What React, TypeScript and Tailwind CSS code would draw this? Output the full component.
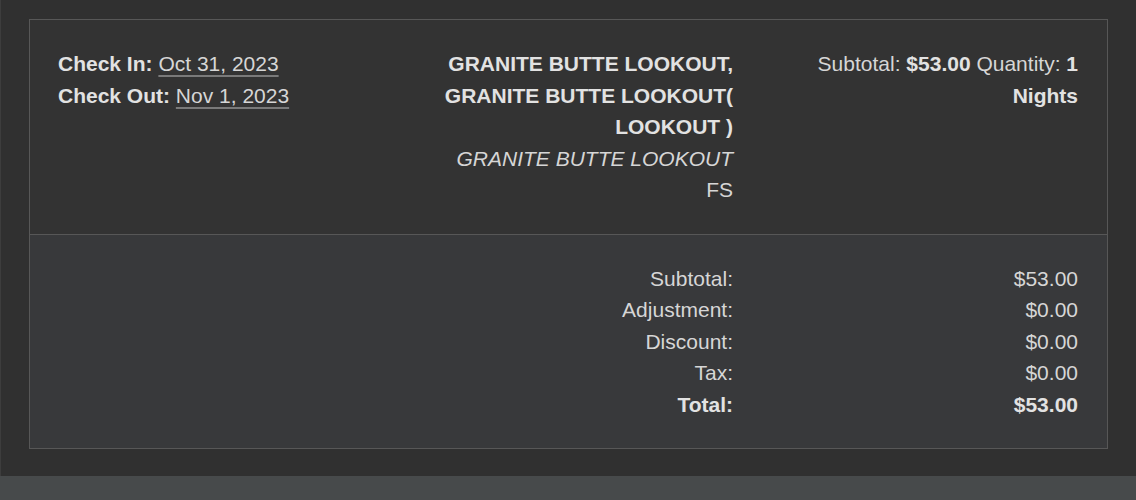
const rows = [
  { label: "Subtotal:", value: "$53.00" },
  { label: "Adjustment:", value: "$0.00" },
  { label: "Discount:", value: "$0.00" },
  { label: "Tax:", value: "$0.00" },
];

const ReservationSummary = () => {
  return (
    <div className="flex h-[500px] w-[1136px] flex-col bg-[#303030] font-['Liberation_Sans',Arial,sans-serif] text-[21px] leading-[31.5px] text-[#d6d6d6]">
      <div className="flex-1 border-l border-[#3d3d3d] pt-[19px] pr-[28px] pl-[28px]">
        <div className="border border-[#575757]">
          <div className="grid grid-cols-[386px_347px_1fr] bg-[#333333]">
            <div className="px-[28px] py-[28px]">
              <div>
                <strong className="font-bold text-[#e2e2e2]">Check In:</strong>{" "}
                <span className="underline decoration-[#7a7a7a] underline-offset-[4px]">
                  Oct 31, 2023
                </span>
              </div>
              <div>
                <strong className="font-bold text-[#e2e2e2]">Check Out:</strong>{" "}
                <span className="underline decoration-[#7a7a7a] underline-offset-[4px]">
                  Nov 1, 2023
                </span>
              </div>
            </div>
            <div className="py-[28px] pr-[30px] pl-[28px] text-right">
              <div className="font-bold text-[#e2e2e2]">
                GRANITE BUTTE LOOKOUT, GRANITE BUTTE LOOKOUT( LOOKOUT )
              </div>
              <div className="italic">GRANITE BUTTE LOOKOUT</div>
              <div>FS</div>
            </div>
            <div className="py-[28px] pr-[29px] pl-[28px] text-right">
              Subtotal: <strong className="font-bold text-[#e2e2e2]">$53.00</strong>{" "}
              Quantity: <strong className="font-bold text-[#e2e2e2]">1 Nights</strong>
            </div>
          </div>
          <div className="grid grid-cols-[386px_347px_1fr] border-t border-[#575757] bg-[#38393b] py-[28px]">
            <div />
            <div className="pr-[30px] pl-[28px] text-right">
              {rows.map((r) => (
                <div key={r.label}>{r.label}</div>
              ))}
              <div className="font-bold text-[#e2e2e2]">Total:</div>
            </div>
            <div className="pr-[29px] pl-[28px] text-right">
              {rows.map((r) => (
                <div key={r.label}>{r.value}</div>
              ))}
              <div className="font-bold text-[#e2e2e2]">$53.00</div>
            </div>
          </div>
        </div>
      </div>
      <div className="h-[24px] bg-[#474a4b]" />
    </div>
  );
};

export default function App() {
  return <ReservationSummary />;
}
